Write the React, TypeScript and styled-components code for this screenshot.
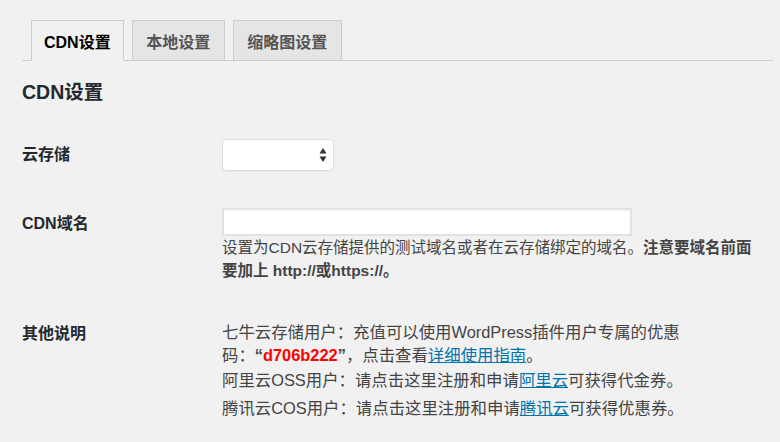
import styled, { createGlobalStyle } from 'styled-components';

const GlobalStyle = createGlobalStyle`
  html, body {
    margin: 0;
    padding: 0;
    background: #f1f1f1;
  }
  body {
    font-family: "Liberation Sans", "Noto Sans CJK SC", sans-serif;
    color: #444;
  }
`;

const Page = styled.div`
  padding: 0 7px 0 22px;
  width: 780px;
  height: 442px;
  box-sizing: border-box;
  overflow: hidden;
`;

const TabBar = styled.nav`
  display: flex;
  align-items: flex-end;
  padding-top: 20px;
  border-bottom: 1px solid #ccc;
`;

const Tab = styled.a<{ $active?: boolean }>`
  display: flex;
  align-items: center;
  box-sizing: border-box;
  height: ${({ $active }) => ($active ? '41px' : '40px')};
  margin-left: 9px;
  margin-bottom: ${({ $active }) => ($active ? '-1px' : '0')};
  padding: 0 ${({ $active }) => ($active ? '12px' : '13.5px')};
  border: 1px solid #ccc;
  border-bottom: ${({ $active }) => ($active ? '1px solid #f1f1f1' : '0')};
  background: ${({ $active }) => ($active ? '#f1f1f1' : '#e5e5e5')};
  color: ${({ $active }) => ($active ? '#000' : '#555')};
  font-size: 16px;
  font-weight: 700;
  text-decoration: none;
  cursor: pointer;

  & + & {
    margin-left: 8px;
  }
`;

const Heading = styled.h2`
  margin: 19px 0 0;
  font-size: 19.5px;
  line-height: 24px;
  font-weight: 700;
  color: #23282d;
`;

const Row = styled.div<{ $top: number }>`
  display: grid;
  grid-template-columns: 200px 1fr;
  align-items: start;
  margin-top: ${({ $top }) => $top}px;
  padding-right: 10px;
`;

const Label = styled.label<{ $lh: number }>`
  font-size: 16px;
  font-weight: 700;
  line-height: ${({ $lh }) => $lh}px;
  color: #23282d;
`;

const SelectWrap = styled.div`
  position: relative;
  width: 112px;
  height: 32px;
`;

const Select = styled.select`
  appearance: none;
  -webkit-appearance: none;
  width: 100%;
  height: 100%;
  box-sizing: border-box;
  border: 1px solid #ddd;
  border-radius: 5px;
  background: #fff;
  box-shadow: 0 1px 1px rgba(0, 0, 0, 0.04);
  outline: none;
`;

const SelectArrows = styled.svg`
  position: absolute;
  right: 7px;
  top: 8px;
  pointer-events: none;
`;

const TextInput = styled.input`
  display: block;
  width: 410px;
  height: 28px;
  box-sizing: border-box;
  border: 2px solid #e2e2e2;
  background: #fff;
  box-shadow: inset 0 1px 2px rgba(0, 0, 0, 0.05);
  outline: none;
`;

const Description = styled.p`
  margin: 0;
  font-size: 15.5px;
  line-height: 23px;
  color: #444;
`;

const Notes = styled.div`
  max-width: 466px;
`;

const Note = styled.p<{ $top: number }>`
  margin: ${({ $top }) => $top}px 0 0;
  font-size: 16.4px;
  line-height: 23px;
  color: #444;
`;

const Code = styled.strong`
  color: #f00;
`;

const Link = styled.a`
  color: #0073aa;
  text-decoration: underline;
`;

export default function App() {
  return (
    <Page>
      <GlobalStyle />
      <TabBar>
        <Tab $active>CDN设置</Tab>
        <Tab>本地设置</Tab>
        <Tab>缩略图设置</Tab>
      </TabBar>

      <Heading>CDN设置</Heading>

      <Row $top={35}>
        <Label $lh={32}>云存储</Label>
        <SelectWrap>
          <Select />
          <SelectArrows width="8" height="16" viewBox="0 0 8 16">
            <path d="M4 1 L7.5 6.5 L0.5 6.5 Z" fill="#333" />
            <path d="M4 15 L7.5 9.5 L0.5 9.5 Z" fill="#333" />
          </SelectArrows>
        </SelectWrap>
      </Row>

      <Row $top={37}>
        <Label $lh={32}>CDN域名</Label>
        <div>
          <TextInput type="text" />
          <Description>
            设置为CDN云存储提供的测试域名或者在云存储绑定的域名。
            <strong>注意要域名前面要加上 http://或https://。</strong>
          </Description>
        </div>
      </Row>

      <Row $top={39}>
        <Label $lh={25}>其他说明</Label>
        <Notes>
          <Note $top={0}>
            七牛云存储用户：充值可以使用WordPress插件用户专属的优惠码：
            <strong>“<Code>d706b222</Code>”</strong>，点击查看<Link>详细使用指南</Link>。
          </Note>
          <Note $top={2}>
            阿里云OSS用户：请点击这里注册和申请<Link>阿里云</Link>可获得代金券。
          </Note>
          <Note $top={5}>
            腾讯云COS用户：请点击这里注册和申请<Link>腾讯云</Link>可获得优惠券。
          </Note>
        </Notes>
      </Row>
    </Page>
  );
}
